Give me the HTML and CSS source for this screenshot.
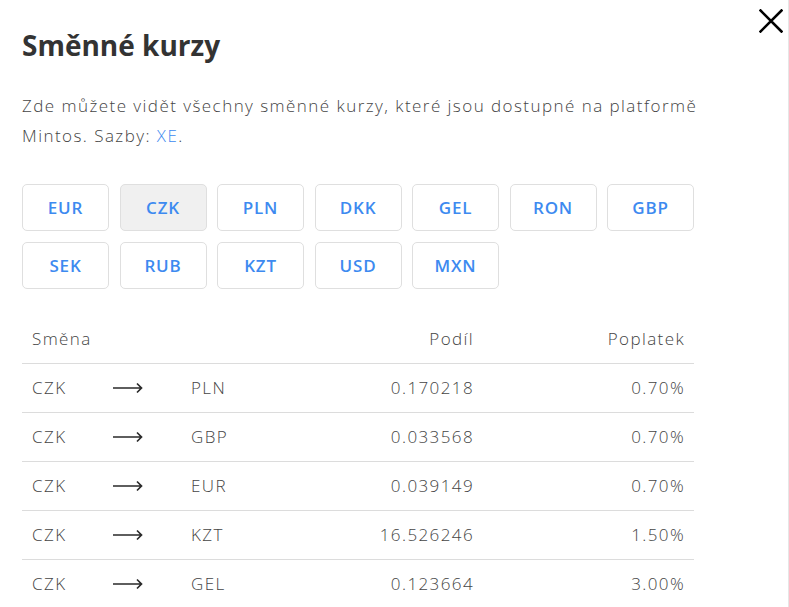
FILE: index.html
```html
<!DOCTYPE html>
<html lang="cs">
<head>
    <meta charset="UTF-8">
    <meta name="viewport" content="width=device-width, initial-scale=1.0">
    <title>Směnné kurzy</title>
    <link rel="stylesheet" href="styles.css">
</head>
<body>
    <div class="modal">
        <button class="close" aria-label="Zavřít">
            <svg width="24" height="24" viewBox="0 0 24 24">
                <path d="M1.5 1.5 L22.5 22.5 M22.5 1.5 L1.5 22.5" stroke="#000" stroke-width="2.6" stroke-linecap="square" fill="none"/>
            </svg>
        </button>

        <h1>Směnné kurzy</h1>
        <p class="intro">Zde můžete vidět všechny směnné kurzy, které jsou dostupné na platformě Mintos. Sazby: <a href="#">XE</a>.</p>

        <div class="currencies">
            <button class="currency">EUR</button>
            <button class="currency active">CZK</button>
            <button class="currency">PLN</button>
            <button class="currency">DKK</button>
            <button class="currency">GEL</button>
            <button class="currency">RON</button>
            <button class="currency">GBP</button>
            <button class="currency">SEK</button>
            <button class="currency">RUB</button>
            <button class="currency">KZT</button>
            <button class="currency">USD</button>
            <button class="currency">MXN</button>
        </div>

        <table class="rates">
            <colgroup>
                <col class="c-from">
                <col class="c-arrow">
                <col class="c-to">
                <col class="c-rate">
                <col class="c-fee">
            </colgroup>
            <thead>
                <tr>
                    <th colspan="3">Směna</th>
                    <th class="num">Podíl</th>
                    <th class="num">Poplatek</th>
                </tr>
            </thead>
            <tbody id="rows"></tbody>
        </table>
    </div>

    <script>
        // Rates for the selected currency
        const rates = [
            ['CZK', 'PLN', '0.170218', '0.70%'],
            ['CZK', 'GBP', '0.033568', '0.70%'],
            ['CZK', 'EUR', '0.039149', '0.70%'],
            ['CZK', 'KZT', '16.526246', '1.50%'],
            ['CZK', 'GEL', '0.123664', '3.00%']
        ];

        const arrow = '<svg class="arrow" width="30" height="12" viewBox="0 0 30 12"><path d="M0 6 H28.5 M24 1.5 L28.5 6 L24 10.5" stroke="#2a2a2a" stroke-width="1.7" fill="none"/></svg>';

        document.getElementById('rows').innerHTML = rates.map(r => `
            <tr>
                <td>${r[0]}</td>
                <td>${arrow}</td>
                <td>${r[1]}</td>
                <td class="num">${r[2]}</td>
                <td class="num">${r[3]}</td>
            </tr>`).join('');
    </script>
</body>
</html>
```

FILE: styles.css
```css
* {
    margin: 0;
    padding: 0;
    box-sizing: border-box;
}

body {
    font-family: "Open Sans", Lato, sans-serif;
    color: #444;
    background: #fff;
}

.modal {
    position: relative;
    width: 789px;
    min-height: 607px;
    padding: 27px 22px 0;
    border-right: 1px solid #e6e6e6;
}

.close {
    position: absolute;
    top: 9px;
    right: 5px;
    background: none;
    border: 0;
    cursor: pointer;
    line-height: 0;
}

h1 {
    font-size: 28px;
    font-weight: 700;
    color: #333;
    line-height: 36px;
    margin-bottom: 28px;
}

.intro {
    font-size: 17px;
    font-weight: 300;
    line-height: 30px;
    letter-spacing: 1.45px;
    color: #444;
    max-width: 705px;
    margin-bottom: 33px;
}

.intro a {
    display: inline-block;
    color: #3d8af0;
    text-decoration: none;
}

.currencies {
    display: grid;
    grid-template-columns: repeat(7, 87px);
    column-gap: 10.5px;
    row-gap: 11px;
    margin-bottom: 25px;
}

.currency {
    height: 47px;
    background: #fff;
    border: 1px solid #dfdfdf;
    border-radius: 5px;
    font-family: "Open Sans", Lato, sans-serif;
    font-size: 17px;
    font-weight: 600;
    letter-spacing: 0.8px;
    color: #3d8af0;
    cursor: pointer;
}

.currency.active {
    background: #f0f0f0;
}

.rates {
    width: 672px;
    border-collapse: collapse;
    table-layout: fixed;
    font-size: 17px;
    font-weight: 300;
    letter-spacing: 1.4px;
    color: #444;
}

.c-from { width: 81px; }
.c-arrow { width: 78px; }
.c-to { width: 150px; }
.c-rate { width: 152px; }
.c-fee { width: 211px; }

.rates th,
.rates td {
    height: 49px;
    padding: 0 10px;
    text-align: left;
    font-weight: 300;
    vertical-align: middle;
}

.rates thead th {
    border-bottom: 1px solid #dcdcdc;
}

.rates tbody td {
    border-top: 1px solid #dcdcdc;
}

.rates .num {
    text-align: right;
    padding-right: 9px;
}

.arrow {
    display: block;
}
```
